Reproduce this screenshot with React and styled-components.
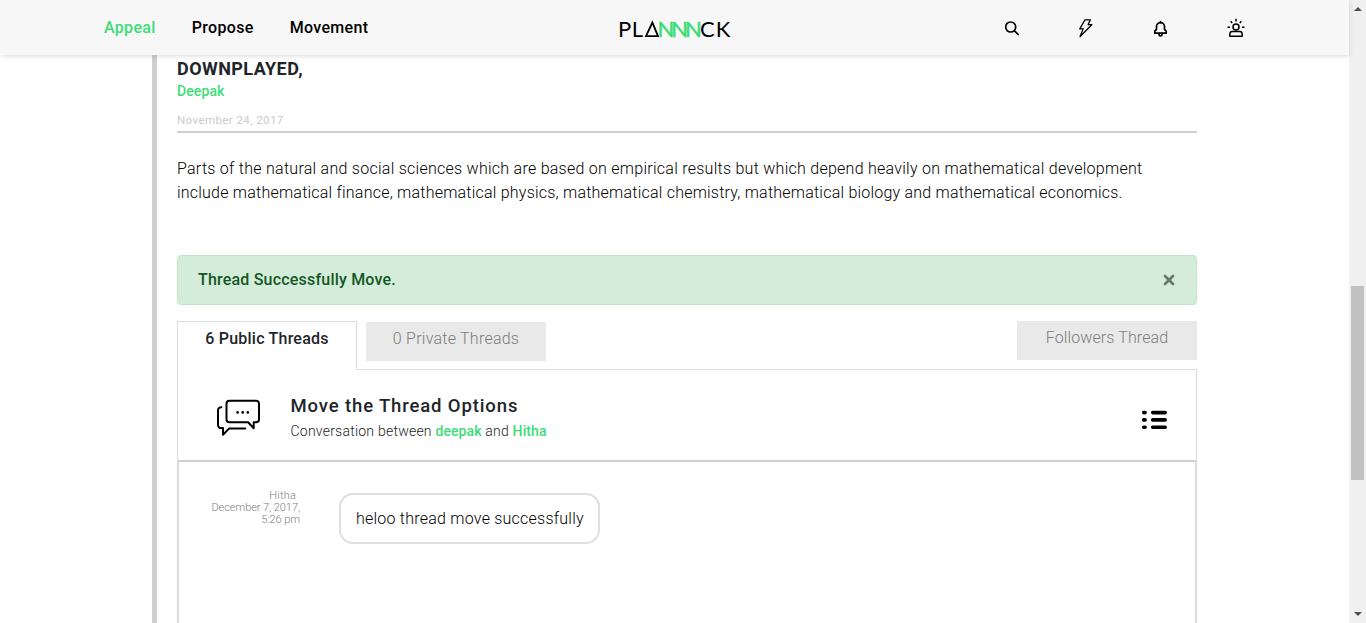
import React from "react";
import styled, { createGlobalStyle } from "styled-components";

const GlobalStyle = createGlobalStyle`
  *, *::before, *::after { box-sizing: border-box; }
  body {
    margin: 0;
    background: #fff;
    color: #212529;
    font-family: Roboto, "Liberation Sans", sans-serif;
    font-weight: 300;
  }
`;

const Screen = styled.div`
  display: flex;
  height: 623px;
  overflow: hidden;
`;

const Page = styled.div`
  flex: 1;
  display: flex;
  flex-direction: column;
  min-width: 0;
`;

const Header = styled.header`
  position: relative;
  z-index: 1;
  flex: none;
  display: grid;
  grid-template-columns: 1fr 118px 1fr;
  align-items: center;
  height: 55px;
  background: #f7f7f7;
  box-shadow: 0 1px 5px rgba(0, 0, 0, 0.14);
`;

const Nav = styled.nav`
  display: flex;
  gap: 36px;
  padding-left: 104px;
`;

const NavLink = styled.a`
  font-size: 16px;
  line-height: 24px;
  font-weight: 500;
  letter-spacing: 0.33px;
  color: ${(p) => (p.$active ? "#3ddc78" : "#000")};
`;

const LogoSvg = styled.svg`
  display: block;
  margin-top: 5px;
  font-family: Lato, sans-serif;
  font-size: 22px;
  font-weight: 400;
`;

const Actions = styled.div`
  display: flex;
  justify-content: flex-end;
  gap: 55px;
  padding-right: 103px;
`;

const Icon = styled.svg`
  display: block;
  flex: none;
  margin-top: ${(p) => p.$drop || 0}px;
  fill: none;
  stroke: ${(p) => p.$color || "#000"};
  stroke-linecap: round;
  stroke-linejoin: round;
`;

const Article = styled.main`
  flex: 1;
  display: flex;
  flex-direction: column;
  width: 1045px;
  margin-left: 152px;
  padding: 2px 0 0 20px;
  border-left: 5px solid #cfcfcf;
`;

const Title = styled.h1`
  margin: 0;
  font-size: 18px;
  line-height: 24px;
  font-weight: 700;
  letter-spacing: 0.43px;
`;

const Author = styled.a`
  font-size: 14px;
  line-height: 20px;
  font-weight: 500;
  letter-spacing: 0.1px;
  color: #3ddc78;
`;

const PostDate = styled.div`
  padding: 11px 0 3px;
  border-bottom: 2px solid #cfcfcf;
  font-size: 11.5px;
  line-height: 16px;
  font-weight: 400;
  letter-spacing: 0.42px;
  color: #cbcbcb;
`;

const Paragraph = styled.p`
  margin: 24px 0 50px;
  font-size: 16px;
  line-height: 24px;
  color: #000;
`;

const Line = styled.span`
  display: block;
  white-space: nowrap;
  letter-spacing: ${(p) => p.$spacing}px;
`;

const Alert = styled.div`
  flex: none;
  display: flex;
  align-items: center;
  justify-content: space-between;
  height: 50px;
  padding: 0 21px 0 20px;
  border: 1px solid #c3e6cb;
  border-radius: 4px;
  background: #d4edda;
  color: #155724;
  font-size: 16px;
  font-weight: 500;
  letter-spacing: 0.2px;
`;

const AlertText = styled.span`
  padding-bottom: 2px;
`;

const Tabs = styled.div`
  flex: none;
  display: flex;
  height: 48px;
  margin-top: 16px;
`;

const Tab = styled.button`
  width: 180px;
  height: 39px;
  margin: ${(p) => p.$margin || 0};
  padding: 0 0 6px;
  border: 0;
  background: #e9e9e9;
  color: #7c7c7c;
  font: inherit;
  font-size: 16px;
  letter-spacing: ${(p) => p.$spacing}px;
`;

const ActiveTab = styled(Tab)`
  position: relative;
  height: 49px;
  padding: 0 0 16px;
  border: 1px solid #dcdcdc;
  border-bottom: 0;
  background: #fff;
  color: #212529;
  font-weight: 500;
`;

const PanelHead = styled.section`
  flex: none;
  display: flex;
  align-items: center;
  height: 91px;
  padding: 0 28px 0 38px;
  border: 1px solid #dcdcdc;
  border-bottom: 0;
`;

const Heading = styled.div`
  flex: 1;
  padding: 5px 0 0 30.5px;
`;

const ThreadTitle = styled.h2`
  margin: 0;
  font-size: 18.5px;
  line-height: 26px;
  font-weight: 500;
  letter-spacing: 0.87px;
`;

const Subtitle = styled.div`
  font-size: 14px;
  line-height: 24px;
  letter-spacing: 0.23px;

  a {
    font-weight: 500;
    letter-spacing: 0.1px;
    color: #3ddc78;
  }
`;

const PanelBody = styled.section`
  flex: 1;
  display: flex;
  align-items: flex-start;
  padding-top: 27px;
  border: 2px solid #dcdcdc;
  border-top-color: #cfcfcf;
  border-bottom: 0;
`;

const Meta = styled.div`
  width: 121px;
  padding-top: 1px;
  font-size: 11px;
  line-height: 12px;
  letter-spacing: -0.06px;
  text-align: right;
  color: #808080;
`;

const Sender = styled.div`
  padding-right: 4px;
  letter-spacing: 0.2px;
`;

const Bubble = styled.div`
  width: 261px;
  height: 51px;
  margin: 4px 0 0 39px;
  padding: 12px 0 0 15px;
  border: 2px solid #dfdfdf;
  border-radius: 14px;
  font-size: 16px;
  line-height: 24px;
  letter-spacing: 0.23px;
  white-space: nowrap;
  color: #000;
`;

const Scrollbar = styled.aside`
  flex: none;
  display: flex;
  flex-direction: column;
  align-items: center;
  width: 17px;
  padding: 7px 0;
  background: #f0f0f0;
`;

const Thumb = styled.div`
  width: 13px;
  height: 194px;
  margin: 275px 0 auto;
  background: #c1c1c1;
`;

const Arrow = styled.div`
  width: 0;
  height: 0;
  border: 4px solid transparent;
  border-top: ${(p) => (p.$up ? "0" : "4px solid #505050")};
  border-bottom: ${(p) => (p.$up ? "4px solid #505050" : "0")};
`;

function Logo() {
  return (
    <LogoSvg width="118" height="28" viewBox="-2 -3 118 28">
      <text x="0" y="18" letterSpacing="0.5">PL</text>
      <path d="M28 17.2 34.4 3.6 40 17.2Z" fill="none" stroke="#000" strokeWidth="1.8" />
      <text x="39.5" y="18" letterSpacing="-3.1" fill="#3ddc78" stroke="#3ddc78" strokeWidth="0.5">NNN</text>
      <text x="82" y="18" letterSpacing="1">CK</text>
    </LogoSvg>
  );
}

function HeaderIcons() {
  return (
    <Actions>
      <Icon width="20" height="20" viewBox="-1 -0.5 20 20" strokeWidth="1.7">
        <circle cx="8.7" cy="8.5" r="5" />
        <path d="m12.5 12.3 3.7 3.7" />
      </Icon>
      <Icon width="20" height="20" viewBox="0 -0.5 20 20" strokeWidth="1.3">
        <path d="M9 1.3h5.4L12.1 6l3.7.2L4.1 18l3.1-7.7-3.4.1Z" />
      </Icon>
      <Icon width="20" height="20" viewBox="1.2 -1 20 20" strokeWidth="1.7">
        <path d="M5 14.2h11.4v-2.1l-1.7-1.8V7.6a4 4 0 0 0-8 0v2.7L5 12.1Z" />
        <path d="M9.2 14.5v1a1.5 1.5 0 0 0 3 0v-1M10.7 3.500v-.8" />
      </Icon>
      <Icon width="20" height="20" viewBox="0.5 -0.3 20 20" strokeWidth="1.5">
        <circle cx="10.5" cy="8.7" r="3" />
        <path d="M4.3 18v-2.1c0-1.7 1-2.6 2.7-2.6h7c1.7 0 2.7.9 2.7 2.6V18Z" />
        <path strokeLinecap="butt" d="M10.5.5v2.7M5.1 3l1.600 1.700M15.900 3l-1.600 1.700M2 8.900h2.600M16.400 8.900H19" />
      </Icon>
    </Actions>
  );
}

export default function App() {
  return (
    <>
      <GlobalStyle />
      <Screen>
        <Page>
          <Header>
            <Nav>
              <NavLink $active>Appeal</NavLink>
              <NavLink>Propose</NavLink>
              <NavLink>Movement</NavLink>
            </Nav>
            <Logo />
            <HeaderIcons />
          </Header>
          <Article>
            <Title>DOWNPLAYED,</Title>
            <Author>Deepak</Author>
            <PostDate>November 24, 2017</PostDate>
            <Paragraph>
              <Line $spacing={0.265}>
                Parts of the natural and social sciences which are based on empirical results but which depend heavily on mathematical development
              </Line>
              <Line $spacing={0.22}>
                include mathematical finance, mathematical physics, mathematical chemistry, mathematical biology and mathematical economics.
              </Line>
            </Paragraph>
            <Alert>
              <AlertText>Thread Successfully Move.</AlertText>
              <Icon width="12" height="12" viewBox="0 0 12 12" strokeWidth="2.7" $color="#6a776d">
                <path d="m2 2 8 8M10 2l-8 8" />
              </Icon>
            </Alert>
            <Tabs>
              <ActiveTab $spacing={0.22}>6 Public Threads</ActiveTab>
              <Tab $spacing={0.25} $margin="1px auto 0 9px">0 Private Threads</Tab>
              <Tab $spacing={0.12}>Followers Thread</Tab>
            </Tabs>
            <PanelHead>
              <Icon width="44" height="38" viewBox="-0.5 0 44 38" strokeWidth="2" $drop={6}>
                <path d="M13 1.7h26.5a3 3 0 0 1 3 3v15.6a3 3 0 0 1-3 3H37.2v5.9l-5.6-5.9H13a3 3 0 0 1-3-3V4.7a3 3 0 0 1 3-3Z" />
                <path d="M4.8 8.2C2.7 8.2 1.5 9.5 1.5 11.5v14.6a3 3 0 0 0 3 3h2v6.600l6.200-6.300h16" />
                <path strokeWidth="2.7" d="M21.1 13.4h.01M26.2 13.4h.01M31.3 13.4h.01" />
              </Icon>
              <Heading>
                <ThreadTitle>Move the Thread Options</ThreadTitle>
                <Subtitle>
                  Conversation between <a>deepak</a> and <a>Hitha</a>
                </Subtitle>
              </Heading>
              <Icon width="27" height="20" viewBox="0 0 27 20" strokeWidth="3.6" $drop={10}>
                <path d="M2.7 2.6h1.4M2.7 9.9h1.4M2.7 17.2h1.4M11.7 2.6h12.5M11.7 9.9h12.5M11.7 17.2h12.5" />
              </Icon>
            </PanelHead>
            <PanelBody>
              <Meta>
                <Sender>Hitha</Sender>
                December 7, 2017,
                <br />
                5:26 pm
              </Meta>
              <Bubble>heloo thread move successfully</Bubble>
            </PanelBody>
          </Article>
        </Page>
        <Scrollbar>
          <Arrow $up />
          <Thumb />
          <Arrow />
        </Scrollbar>
      </Screen>
    </>
  );
}
